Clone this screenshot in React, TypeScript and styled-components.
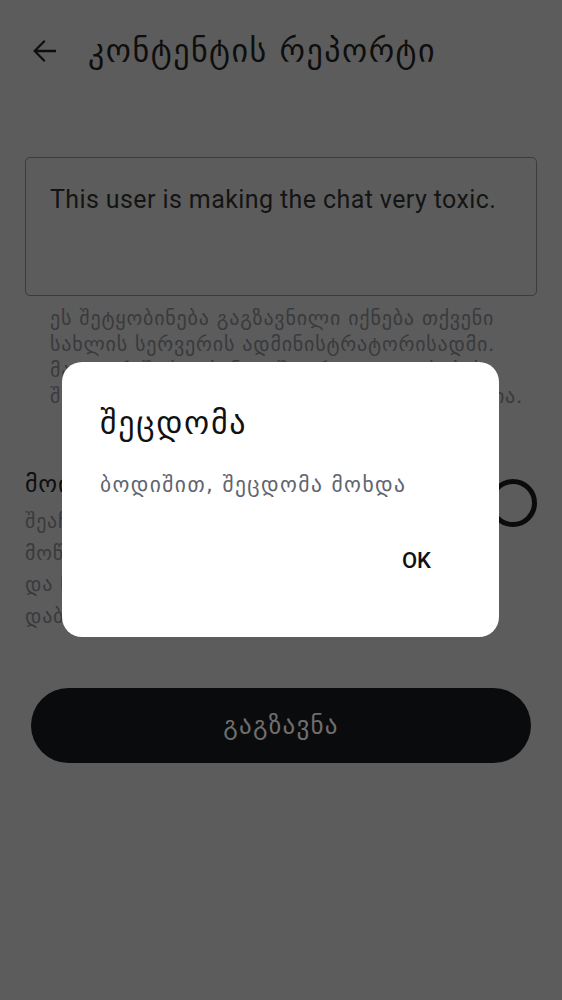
import styled, { createGlobalStyle } from "styled-components";

const GlobalStyle = createGlobalStyle`
  html, body {
    margin: 0;
    padding: 0;
    background: #5c5c5c;
  }
  body {
    font-family: Roboto, "DejaVu Sans", sans-serif;
  }
`;

const Page = styled.div`
  width: 562px;
  min-height: 1000px;
  box-sizing: border-box;
  padding: 0 25px;
  background: #5c5c5c;
  display: flex;
  flex-direction: column;
`;

const Header = styled.header`
  height: 102px;
  display: flex;
  align-items: center;
  gap: 32px;
  padding-left: 7px;
`;

const BackIcon = styled.svg`
  width: 24px;
  height: 24px;
  color: #0e0e0e;
  flex-shrink: 0;
`;

const Title = styled.h1`
  margin: 0;
  font-family: "DejaVu Sans", sans-serif;
  font-weight: 400;
  font-size: 32px;
  letter-spacing: 1.5px;
  color: #0e0e0e;
`;

const InputBox = styled.div`
  margin-top: 55px;
  height: 139px;
  box-sizing: border-box;
  border: 1.5px solid #3b3c3f;
  border-radius: 5px;
  padding: 27px 24px;
  font-size: 25px;
  letter-spacing: 0.4px;
  line-height: 30px;
  color: #141414;
`;

const Helper = styled.div`
  margin-top: 9px;
  padding-left: 25px;
  font-family: "DejaVu Sans", sans-serif;
  font-size: 20px;
  letter-spacing: 0.8px;
  line-height: 26px;
  color: #393a3d;
  display: flex;
  flex-direction: column;
`;

const Line = styled.span`
  white-space: nowrap;
`;

const OptionRow = styled.div`
  margin-top: 60px;
  display: flex;
  align-items: flex-start;
  justify-content: space-between;
`;

const OptionText = styled.div`
  display: flex;
  flex-direction: column;
`;

const OptionLabel = styled.div`
  font-family: "DejaVu Sans", sans-serif;
  font-size: 24px;
  letter-spacing: 0.8px;
  line-height: 30px;
  color: #0e0e0e;
`;

const OptionDesc = styled.div`
  margin-top: 7px;
  font-family: "DejaVu Sans", sans-serif;
  font-size: 20px;
  letter-spacing: 0.8px;
  line-height: 31.5px;
  color: #393a3d;
  display: flex;
  flex-direction: column;
`;

const Switch = styled.div`
  margin-top: 10px;
  width: 48px;
  height: 48px;
  box-sizing: border-box;
  border: 5px solid #0b0b0d;
  border-radius: 50%;
  flex-shrink: 0;
`;

const SendButton = styled.button`
  margin: 56px 6px 0;
  height: 75px;
  border: none;
  border-radius: 38px;
  background: #0a0b0d;
  color: #6e6e6e;
  font-family: "DejaVu Sans", sans-serif;
  font-size: 25px;
  letter-spacing: 1.25px;
`;

const Scrim = styled.div`
  position: fixed;
  inset: 0;
  display: flex;
  justify-content: center;
  align-items: flex-start;
`;

const Dialog = styled.div`
  margin-top: 362px;
  margin-left: -1px;
  width: 437px;
  height: 275px;
  box-sizing: border-box;
  background: #ffffff;
  border-radius: 20px;
  padding: 41px 38px 0;
  display: flex;
  flex-direction: column;
`;

const DialogTitle = styled.h2`
  margin: 0;
  font-family: "DejaVu Sans", sans-serif;
  font-weight: 400;
  font-size: 32px;
  letter-spacing: 1.7px;
  line-height: 40px;
  color: #111111;
`;

const DialogBody = styled.p`
  margin: 28px 0 0;
  font-family: "DejaVu Sans", sans-serif;
  font-size: 21.5px;
  letter-spacing: 1.4px;
  line-height: 28px;
  color: #5f6570;
`;

const Actions = styled.div`
  margin-top: 49px;
  display: flex;
  justify-content: flex-end;
  padding-right: 30px;
`;

const OkButton = styled.button`
  border: none;
  background: transparent;
  padding: 0;
  font-family: Roboto, sans-serif;
  font-weight: 500;
  font-size: 22px;
  line-height: 26px;
  color: #111111;
`;

export default function App() {
  return (
    <>
      <GlobalStyle />
      <Page>
        <Header>
          <BackIcon viewBox="4 4 16 16">
            <path
              fill="currentColor"
              d="M20 11.1H7.6l5.4-5.4-1-1-7.3 7.3 7.3 7.3 1-1-5.4-5.4H20z"
            />
          </BackIcon>
          <Title>კონტენტის რეპორტი</Title>
        </Header>

        <InputBox>This user is making the chat very toxic.</InputBox>

        <Helper>
          <Line>ეს შეტყობინება გაგზავნილი იქნება თქვენი</Line>
          <Line>სახლის სერვერის ადმინისტრატორისადმი.</Line>
          <Line>მათ ვერ შეძლებენ დაშიფრული ოთახების</Line>
          <Line>შეტყობინებების წაკითხვას, თუ დაშიფრულია.</Line>
        </Helper>

        <OptionRow>
          <OptionText>
            <OptionLabel>მოიგნორეთ მომხმარებელი</OptionLabel>
            <OptionDesc>
              <Line>შეაჩერეთ ამ მომხმარებლის</Line>
              <Line>მოწერილი შეტყობინებების ჩვენება</Line>
              <Line>და ნუ ნახავთ მათ</Line>
              <Line>დაბლოკვამდე</Line>
            </OptionDesc>
          </OptionText>
          <Switch />
        </OptionRow>

        <SendButton>გაგზავნა</SendButton>
      </Page>

      <Scrim>
        <Dialog>
          <DialogTitle>შეცდომა</DialogTitle>
          <DialogBody>ბოდიშით, შეცდომა მოხდა</DialogBody>
          <Actions>
            <OkButton>OK</OkButton>
          </Actions>
        </Dialog>
      </Scrim>
    </>
  );
}
